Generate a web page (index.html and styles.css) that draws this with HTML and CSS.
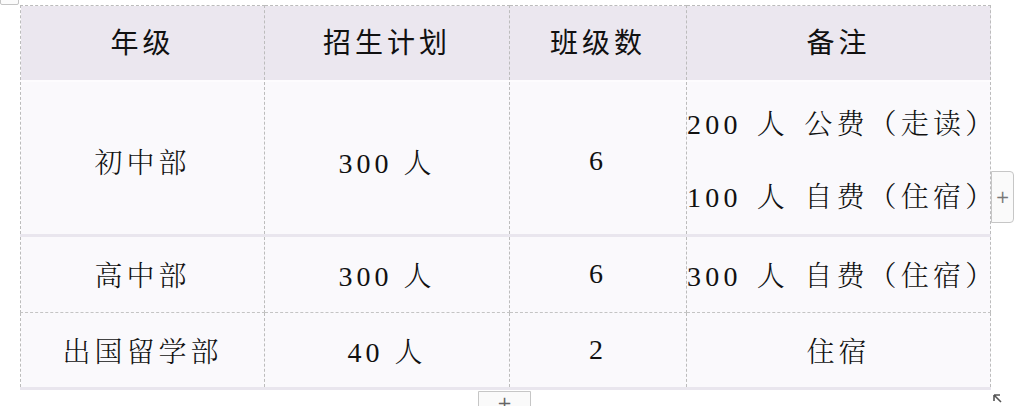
FILE: index.html
```html
<!DOCTYPE html>
<html lang="zh">
<head>
<meta charset="utf-8">
<title>招生计划</title>
<link rel="stylesheet" href="styles.css">
</head>
<body>
<div class="editor">
  <div class="move-handle"></div>
  <table class="plan">
    <colgroup>
      <col class="c1"><col class="c2"><col class="c3"><col class="c4">
    </colgroup>
    <thead>
      <tr class="head">
        <th>年级</th><th>招生计划</th><th>班级数</th><th>备注</th>
      </tr>
    </thead>
    <tbody>
      <tr class="r1">
        <td>初中部</td><td>300 人</td><td>6</td>
        <td class="note"><div class="line">200 人 公费（走读）</div><div class="line">100 人 自费（住宿）</div></td>
      </tr>
      <tr class="r2">
        <td>高中部</td><td>300 人</td><td>6</td><td class="note">300 人 自费（住宿）</td>
      </tr>
      <tr class="r3">
        <td>出国留学部</td><td>40 人</td><td>2</td><td>住宿</td>
      </tr>
    </tbody>
  </table>
  <div class="add-col">+</div>
  <div class="add-row">+</div>
  <svg class="resize" width="10" height="10" viewBox="0 0 10 10"><path d="M1 1 L1 7 M1 1 L7 1 M1 1 L8 8" stroke="#555" stroke-width="1.6" fill="none"/></svg>
</div>
</body>
</html>
```
FILE: styles.css
```css
html, body {
  margin: 0;
  padding: 0;
  background: #ffffff;
  width: 1015px;
  height: 406px;
  overflow: hidden;
}
.editor {
  position: relative;
  width: 1015px;
  height: 406px;
  padding: 5px 0 0 20px;
  box-sizing: border-box;
}
.move-handle {
  position: absolute;
  left: 0;
  top: -14px;
  width: 17px;
  height: 17px;
  border: 1px solid #c4c4c4;
  border-radius: 2px;
  background: #fbfbfb;
}
.plan {
  border-collapse: collapse;
  table-layout: fixed;
  width: 970px;
  font-family: "Liberation Serif", "Noto Serif CJK SC", "Noto Sans CJK SC", serif;
  font-size: 28px;
  letter-spacing: 4px;
  color: #111;
}
.c1 { width: 244px; }
.c2 { width: 245px; }
.c3 { width: 177px; }
.c4 { width: 304px; }
.plan th, .plan td {
  padding: 0;
  text-align: center;
  vertical-align: middle;
  border-left: 1px dashed #bcbcbc;
  border-right: 1px dashed #bcbcbc;
  white-space: nowrap;
}
.plan td { font-weight: 300; }
.head th {
  background: #ebe7ef;
  height: 75px;
  padding-bottom: 3px;
  box-sizing: border-box;
  font-weight: 400;
  font-family: "Noto Sans CJK SC", sans-serif;
  border-top: 1px dashed #bcbcbc;
  border-bottom: 2px solid #fdfcfe;
}
.r1 td {
  background: #faf9fc;
  height: 145px;
  border-bottom: 3px solid #e9e6ee;
}
.r2 td {
  background: #faf9fc;
  height: 75px;
  border-bottom: 1px dashed #c4c4c4;
}
.r3 td {
  background: #faf9fc;
  height: 74px;
  border-bottom: 3px solid #e9e6ee;
}
.note {
  letter-spacing: 4.2px;
  word-spacing: 4px;
}
.note .line {
  line-height: 73px;
}
.r1 td {
  padding-top: 6px;
}
.add-col {
  position: absolute;
  left: 991px;
  top: 171px;
  width: 21px;
  height: 50px;
  border: 1px solid #c6c6c6;
  border-radius: 0 4px 4px 0;
  background: #fafafa;
  color: #777;
  font-family: "DejaVu Sans", sans-serif;
  font-size: 17px;
  line-height: 50px;
  text-align: center;
}
.add-row {
  position: absolute;
  left: 478px;
  top: 391px;
  width: 51px;
  height: 22px;
  border: 1px solid #c6c6c6;
  border-radius: 0 0 4px 4px;
  background: #fafafa;
  color: #666;
  font-family: "DejaVu Sans", sans-serif;
  font-size: 18px;
  line-height: 22px;
  text-align: center;
}
.resize {
  position: absolute;
  left: 993px;
  top: 394px;
}
```
